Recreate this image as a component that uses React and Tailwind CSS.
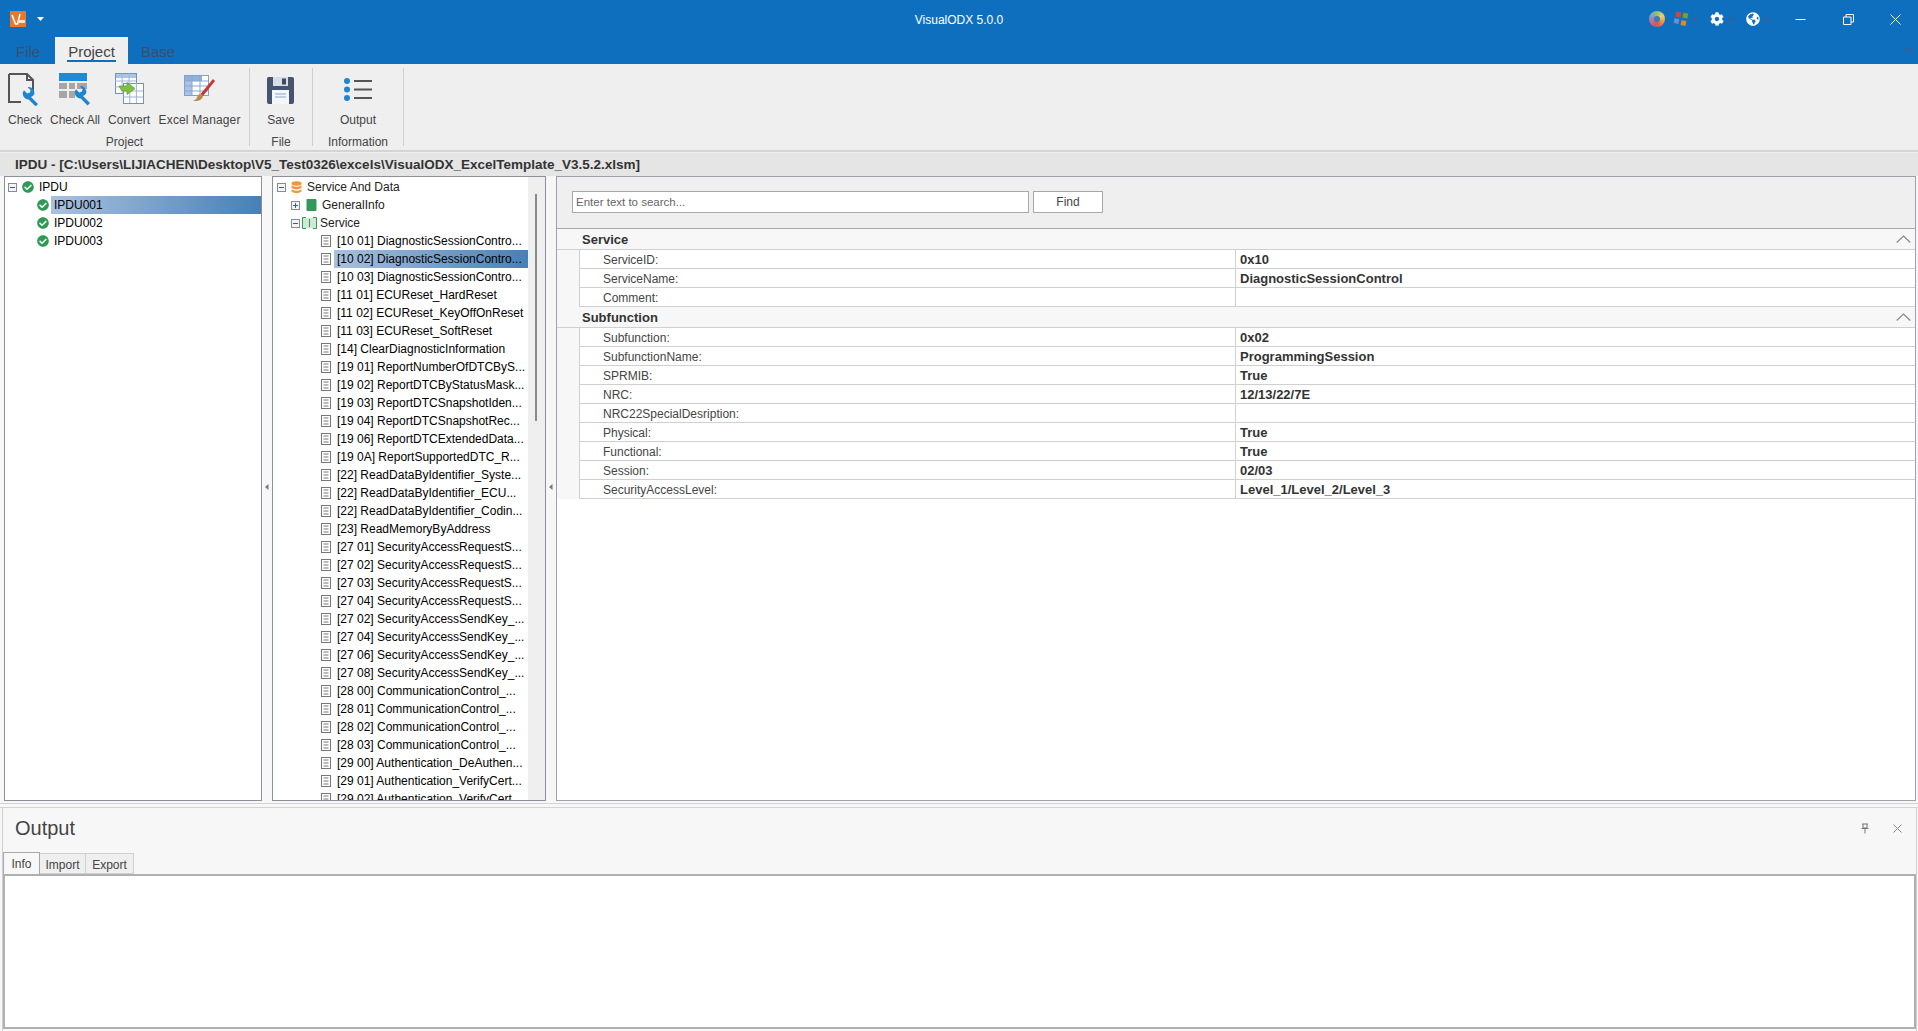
import React from "react";
import { FaCog, FaGlobeAmericas, FaCheckCircle } from "react-icons/fa";

const Chevron = ({ className = "" }) => (
  <svg width="8" height="5" viewBox="0 0 8 5" className={className}>
    <path d="M0.7 0.7 L4 4 L7.3 0.7" fill="none" stroke="#3d5f86" strokeWidth="1.4" />
  </svg>
);

const Wrench = ({ x = 0, y = 0 }) => (
  <g transform={`translate(${x} ${y})`}>
    <path d="M1 1.2 L4.2 4.4 L7 3.6 L7.6 0.9 L4.6 -1.8 A5.7 5.7 0 0 1 11 5.8 A5.7 5.7 0 0 1 8 8 L15 15 L12.6 17.4 L5.7 10.4 A5.7 5.7 0 0 1 1 1.2 Z" fill="#1d86cf" />
  </g>
);

const CheckIcon = () => (
  <svg width="34" height="33" viewBox="0 0 34 33">
    <path d="M1 1 H19 L25 7 V18 M25 7 H19 V1 M1 1 V29 H13" fill="none" stroke="#555" strokeWidth="2" />
    <Wrench x={15} y={16} />
  </svg>
);

const CheckAllIcon = () => (
  <svg width="34" height="33" viewBox="0 0 34 33">
    <rect x="1" y="0" width="28" height="8" fill="#2389d2" />
    <g fill="#a6a6a6">
      <rect x="1" y="10" width="8" height="6" />
      <rect x="11" y="10" width="6" height="6" />
      <rect x="19" y="10" width="10" height="6" />
      <rect x="1" y="18" width="8" height="7" />
      <rect x="11" y="18" width="6" height="7" />
    </g>
    <Wrench x={17} y={15} />
  </svg>
);

const Sheet = ({ x, y, w, h, head = "#a9c6e8" }) => (
  <g transform={`translate(${x} ${y})`}>
    <rect x="0.5" y="0.5" width={w} height={h} fill="#fff" stroke="#7590bd" />
    <rect x="1" y="1" width={w - 1} height="4" fill={head} />
    <path d={`M0 ${h * 0.4} H${w} M0 ${h * 0.7} H${w} M${w * 0.34} 0 V${h} M${w * 0.67} 0 V${h}`} stroke="#9db4d6" strokeWidth="1" />
  </g>
);

const ConvertIcon = () => (
  <svg width="31" height="32" viewBox="0 0 31 32">
    <Sheet x={1} y={0} w={21} h={20} />
    <Sheet x={9} y={10} w={20} h={20} head="#fff" />
    <path d="M5 13 H13 V9.5 L21 15.5 L13 21.5 V18 H8 Z" fill="#7fc241" stroke="#5f9a2c" strokeWidth="0.7" />
  </svg>
);

const ExcelIcon = () => (
  <svg width="32" height="30" viewBox="0 0 32 30">
    <rect x="0.5" y="2.5" width="24" height="20" fill="#fff" stroke="#8aa0c2" />
    <rect x="1" y="3" width="17" height="5" fill="#8fb1dc" />
    <rect x="1" y="8" width="7" height="14" fill="#a9c4e6" />
    <path d="M0 8 H24 M0 13 H24 M0 18 H24 M8 3 V22 M16 3 V22" stroke="#8aa7cf" strokeWidth="1" />
    <path d="M29 6 L31 8 L19 23 L16.5 21 Z" fill="#c8382e" />
    <path d="M16 21 L19 23.5 C18 27 14 28.5 9 28 C12 27 13 25 13.5 23 C14 22 15 21 16 21 Z" fill="#b98a4e" />
  </svg>
);

const SaveIcon = () => (
  <svg width="27" height="27" viewBox="0 0 27 27">
    <path d="M1.5 0 H25 Q27 0 27 2 V25 Q27 27 25 27 H2 Q0 27 0 25 V1.5 Q0 0 1.5 0 Z" fill="#46546f" />
    <rect x="6" y="0" width="15" height="9" fill="#d9dde5" />
    <rect x="15" y="1.5" width="4" height="6" fill="#3d4a63" />
    <rect x="5" y="13" width="17" height="14" fill="#f4f6fa" />
    <path d="M8 17 H19 M8 20 H19" stroke="#7fa6d6" strokeWidth="1" />
  </svg>
);

const OutputIcon = () => (
  <svg width="29" height="23" viewBox="0 0 29 23">
    <circle cx="3" cy="3" r="3" fill="#1d86cf" />
    <circle cx="3" cy="11.5" r="3" fill="#1d86cf" />
    <circle cx="3" cy="20" r="3" fill="#1d86cf" />
    <path d="M10 3 H28 M10 11.5 H28 M10 20 H28" stroke="#555" strokeWidth="2" />
  </svg>
);

const Logo = () => (
  <svg width="16" height="16" viewBox="0 0 16 16" className="block">
    <rect width="16" height="16" fill="#e8782b" />
    <path d="M2 4 L5.5 13 L7.5 13 L10 3" fill="none" stroke="#fff" strokeWidth="1.6" />
    <rect x="8" y="9" width="7" height="3" fill="#fbe3d0" />
  </svg>
);

const Squares = () => (
  <svg width="16" height="16" viewBox="0 0 16 16">
    <rect x="3" y="1" width="5" height="5" transform="rotate(10 5 3)" fill="#d9403a" />
    <rect x="10" y="2" width="5" height="5" transform="rotate(10 12 4)" fill="#78a02e" />
    <rect x="1" y="7.5" width="5" height="5" transform="rotate(10 3 10)" fill="#5e94cf" />
    <rect x="8" y="9.5" width="5" height="5" transform="rotate(10 10 12)" fill="#e2862e" />
  </svg>
);

const Expander = ({ open }) => (
  <svg width="9" height="9" viewBox="0 0 9 9" className="shrink-0">
    <rect x="0.5" y="0.5" width="8" height="8" fill="#f4f4f4" stroke="#8a8a8a" />
    <path d={open ? "M2 4.5 H7" : "M2 4.5 H7 M4.5 2 V7"} stroke="#2f5f9a" strokeWidth="1" />
  </svg>
);

const LeafIcon = () => (
  <svg width="10" height="12" viewBox="0 0 10 12" className="shrink-0">
    <rect x="0.5" y="0.5" width="9" height="11" fill="#fff" stroke="#777" />
    <path d="M2.5 3 H7.5 M2.5 6 H7.5 M2.5 9 H7.5" stroke="#777" strokeWidth="1" />
  </svg>
);

const DbIcon = () => (
  <svg width="11" height="13" viewBox="0 0 11 13" className="shrink-0">
    <ellipse cx="5.5" cy="2.5" rx="5" ry="2.2" fill="#f0963a" />
    <path d="M0.5 4.2 Q5.5 7.4 10.5 4.2 V7 Q5.5 9.8 0.5 7 Z" fill="#f0963a" />
    <path d="M0.5 8.2 Q5.5 11.4 10.5 8.2 V10.6 Q5.5 13.8 0.5 10.6 Z" fill="#f0963a" />
  </svg>
);

const BookIcon = () => (
  <svg width="11" height="12" viewBox="0 0 11 12" className="shrink-0">
    <rect x="0.5" y="0" width="10" height="12" rx="1" fill="#32995a" />
  </svg>
);

const ServiceIcon = () => (
  <svg width="15" height="12" viewBox="0 0 15 12" className="shrink-0">
    <rect x="1" y="1" width="13" height="10" fill="#cfe9d5" />
    <path d="M4 0.5 H0.5 V11.5 H4 M11 0.5 H14.5 V11.5 H11 M7.5 2 V10" fill="none" stroke="#2f9a55" strokeWidth="1" />
  </svg>
);

const RibbonButton = ({ icon, label, width = "", labelClass = "" }) => (
  <div className={`flex flex-col items-center ${width}`}>
    <div className="h-[44px] flex items-start pt-[9px]">{icon}</div>
    <div className={`mt-[4px] h-[16px] leading-[16px] text-[12px] text-[#444] whitespace-nowrap ${labelClass}`}>{label}</div>
  </div>
);

const RibbonGroup = ({ label, width, pad, gap, children }) => (
  <div className={`flex flex-col ${width} border-r border-[#cfcfcf] h-[78px] mt-[4px] shrink-0`}>
    <div className={`flex ${pad} ${gap} h-[64px] -mt-[4px]`}>{children}</div>
    <div className="text-center text-[12px] leading-[16px] text-[#444] mt-[6px]">{label}</div>
  </div>
);

const services = [
  "[10 01] DiagnosticSessionContro...",
  "[10 02] DiagnosticSessionContro...",
  "[10 03] DiagnosticSessionContro...",
  "[11 01] ECUReset_HardReset",
  "[11 02] ECUReset_KeyOffOnReset",
  "[11 03] ECUReset_SoftReset",
  "[14] ClearDiagnosticInformation",
  "[19 01] ReportNumberOfDTCByS...",
  "[19 02] ReportDTCByStatusMask...",
  "[19 03] ReportDTCSnapshotIden...",
  "[19 04] ReportDTCSnapshotRec...",
  "[19 06] ReportDTCExtendedData...",
  "[19 0A] ReportSupportedDTC_R...",
  "[22] ReadDataByIdentifier_Syste...",
  "[22] ReadDataByIdentifier_ECU...",
  "[22] ReadDataByIdentifier_Codin...",
  "[23] ReadMemoryByAddress",
  "[27 01] SecurityAccessRequestS...",
  "[27 02] SecurityAccessRequestS...",
  "[27 03] SecurityAccessRequestS...",
  "[27 04] SecurityAccessRequestS...",
  "[27 02] SecurityAccessSendKey_...",
  "[27 04] SecurityAccessSendKey_...",
  "[27 06] SecurityAccessSendKey_...",
  "[27 08] SecurityAccessSendKey_...",
  "[28 00] CommunicationControl_...",
  "[28 01] CommunicationControl_...",
  "[28 02] CommunicationControl_...",
  "[28 03] CommunicationControl_...",
  "[29 00] Authentication_DeAuthen...",
  "[29 01] Authentication_VerifyCert...",
  "[29 02] Authentication_VerifyCert...",
];

const serviceProps = [
  ["ServiceID:", "0x10"],
  ["ServiceName:", "DiagnosticSessionControl"],
  ["Comment:", ""],
];
const subProps = [
  ["Subfunction:", "0x02"],
  ["SubfunctionName:", "ProgrammingSession"],
  ["SPRMIB:", "True"],
  ["NRC:", "12/13/22/7E"],
  ["NRC22SpecialDesription:", ""],
  ["Physical:", "True"],
  ["Functional:", "True"],
  ["Session:", "02/03"],
  ["SecurityAccessLevel:", "Level_1/Level_2/Level_3"],
];

const Section = ({ title, rows }) => (
  <div>
    <div className="h-[21px] flex items-center justify-between pl-[25px] pr-[4px] bg-[#f7f7f7] border-b border-[#d0d0d0]">
      <span className="text-[13px] font-bold text-[#333] mt-[1px]">{title}</span>
      <svg width="15" height="8" viewBox="0 0 15 8">
        <path d="M0.7 7.5 L7.5 1 L14.3 7.5" fill="none" stroke="#888" strokeWidth="1.2" />
      </svg>
    </div>
    {rows.map(([k, v]) => (
      <div key={k} className="flex h-[19px] bg-[#f7f7f7]">
        <div className="w-[22px] shrink-0" />
        <div className="flex flex-1 bg-white border-l border-b border-[#d0d0d0]">
          <div className="w-[656px] shrink-0 pl-[23px] text-[12px] leading-[20px] text-[#444] border-r border-[#d0d0d0] whitespace-nowrap">{k}</div>
          <div className="pl-[4px] text-[13px] font-bold leading-[20px] text-[#333] whitespace-nowrap">{v}</div>
        </div>
      </div>
    ))}
  </div>
);

const SplitArrow = () => (
  <div className="w-[10px] shrink-0 flex items-center justify-center">
    <svg width="4" height="6" viewBox="0 0 4 6" className="mt-[-3px]">
      <path d="M3.5 0 L0 3 L3.5 6 Z" fill="#777" />
    </svg>
  </div>
);

export default function App() {
  return (
    <div className="w-[1918px] h-[1031px] overflow-hidden flex flex-col bg-[#f7f7f7] font-['Liberation_Sans',Arial,sans-serif]">
      {/* Title bar */}
      <div className="h-[37px] bg-[#0f6fbf] flex items-center relative shrink-0">
        <div className="ml-[10px] mt-[1px]"><Logo /></div>
        <svg width="7" height="4" viewBox="0 0 7 4" className="ml-[11px] mt-[1px]"><path d="M0 0 H7 L3.5 4 Z" fill="#fff" /></svg>
        <div className="absolute left-0 right-0 top-[12px] text-center text-[12px] leading-[16px] text-white">VisualODX 5.0.0</div>
        <div className="ml-auto flex items-center mt-[1px]">
          <div className="w-[16px] h-[16px] rounded-full bg-[conic-gradient(#8fc06a,#e8d36a,#e8913f,#d9534f,#c26a8c,#7aa0d0,#8fc06a)] flex items-center justify-center">
            <div className="w-[6px] h-[6px] rounded-full bg-[#3f78b8]" />
          </div>
          <div className="ml-[8px]"><Squares /></div>
          <Chevron className="ml-[3px]" />
          <FaCog className="ml-[10px] text-white text-[14px]" />
          <Chevron className="ml-[4px]" />
          <FaGlobeAmericas className="ml-[10px] text-white text-[14px]" />
          <Chevron className="ml-[4px]" />
          <div className="ml-[4px] w-[48px] flex justify-center"><svg width="11" height="11" viewBox="0 0 11 11"><path d="M0.5 5.5 H10.5" stroke="#fff" strokeWidth="1" /></svg></div>
          <div className="w-[48px] flex justify-center"><svg width="11" height="11" viewBox="0 0 11 11"><path d="M0.5 3 H8 V10.5 H0.5 Z M3 3 V0.5 H10.5 V8 H8" fill="none" stroke="#fff" strokeWidth="1" /></svg></div>
          <div className="w-[46px] flex justify-center"><svg width="11" height="11" viewBox="0 0 11 11"><path d="M0.5 0.5 L10.5 10.5 M10.5 0.5 L0.5 10.5" stroke="#fff" strokeWidth="1" /></svg></div>
        </div>
      </div>
      {/* Tabs */}
      <div className="h-[27px] bg-[#0f6fbf] flex shrink-0 relative text-[15px]">
        <div className="ml-[16px] w-[39px] leading-[29px] text-[#3b5068]">File</div>
        <div className="w-[73px] bg-[#efefef] text-center relative text-[#444] leading-[29px]">
          Project
          <div className="absolute left-[12px] right-[12px] bottom-[2px] h-[2px] bg-[#0f6fbf]" />
        </div>
        <div className="ml-[13px] leading-[29px] text-[#3b5068]">Base</div>
        <svg width="9" height="6" viewBox="0 0 9 6" className="absolute right-[5px] top-[10px]"><path d="M0.7 5 L4.5 1.2 L8.3 5" fill="none" stroke="#3d5f86" strokeWidth="1.4" /></svg>
      </div>
      {/* Ribbon */}
      <div className="h-[86px] bg-[#efefef] flex shrink-0 items-start">
        <RibbonGroup label="Project" width="w-[250px]" pad="pl-[8px]" gap="gap-[8px]">
          <RibbonButton icon={<CheckIcon />} label="Check" />
          <RibbonButton icon={<CheckAllIcon />} label="Check All" />
          <RibbonButton icon={<ConvertIcon />} label="Convert" />
          <RibbonButton icon={<ExcelIcon />} label="Excel Manager" width="w-[83px]" labelClass="tracking-[0.15px]" />
        </RibbonGroup>
        <RibbonGroup label="File" width="w-[63px]" pad="justify-center" gap="">
          <RibbonButton icon={<div className="pt-[4px]"><SaveIcon /></div>} label="Save" />
        </RibbonGroup>
        <RibbonGroup label="Information" width="w-[91px]" pad="justify-center" gap="">
          <RibbonButton icon={<div className="pt-[5px]"><OutputIcon /></div>} label="Output" />
        </RibbonGroup>
      </div>
      {/* Document title */}
      <div className="h-[3px] shrink-0 bg-[#d4d4d4] border-b border-[#efefef]" />
      <div className="h-[23px] shrink-0 bg-[#e5e5e5] pl-[15px] text-[13.5px] font-bold leading-[23px] text-[#333] whitespace-nowrap">
        IPDU - [C:\Users\LIJIACHEN\Desktop\V5_Test0326\excels\VisualODX_ExcelTemplate_V3.5.2.xlsm]
      </div>
      {/* Panels */}
      <div className="h-[625px] shrink-0 flex pl-[4px] pr-[2px]">
        <div className="w-[258px] shrink-0 bg-white border border-[#8f8f9c] overflow-hidden text-[12px] text-black">
          <div className="h-[18px] flex items-center pl-[3px] mt-[1px]">
            <Expander open />
            <FaCheckCircle className="ml-[5px] text-[12px] text-[#2f9a55]" />
            <span className="ml-[5px]">IPDU</span>
          </div>
          {["IPDU001", "IPDU002", "IPDU003"].map((n, i) => (
            <div key={n} className="h-[18px] flex items-center pl-[32px]">
              <FaCheckCircle className="text-[12px] text-[#2f9a55] shrink-0" />
              <span className={`ml-[2px] pl-[3px] flex-1 h-[18px] leading-[18px] ${i === 0 ? "bg-linear-to-r from-[#a9c1df] to-[#4680b6]" : ""}`}>{n}</span>
            </div>
          ))}
        </div>
        <SplitArrow />
        <div className="w-[274px] shrink-0 bg-white border border-[#8f8f9c] overflow-hidden text-[12px] text-black flex">
          <div className="flex-1 min-w-0 overflow-hidden">
            <div className="h-[18px] flex items-center pl-[4px] mt-[1px]">
              <Expander open />
              <span className="ml-[5px]"><DbIcon /></span>
              <span className="ml-[5px] text-[#222]">Service And Data</span>
            </div>
            <div className="h-[18px] flex items-center pl-[18px]">
              <Expander />
              <span className="ml-[6px]"><BookIcon /></span>
              <span className="ml-[5px] text-[#222]">GeneralInfo</span>
            </div>
            <div className="h-[18px] flex items-center pl-[18px]">
              <Expander open />
              <span className="ml-[2px]"><ServiceIcon /></span>
              <span className="ml-[3px] text-[#222]">Service</span>
            </div>
            {services.map((s, i) => (
              <div key={i} className="h-[18px] flex items-center pl-[48px]">
                <LeafIcon />
                <span className={`ml-[3px] pl-[3px] flex-1 h-[18px] leading-[18px] whitespace-nowrap ${i === 1 ? "bg-linear-to-r from-[#a9c1df] to-[#4680b6]" : ""}`}>{s}</span>
              </div>
            ))}
          </div>
          <div className="w-[17px] shrink-0 bg-[#efefef] pt-[17px] pl-[7px]">
            <div className="w-[2px] h-[227px] bg-[#8a8a8a]" />
          </div>
        </div>
        <SplitArrow />
        <div className="flex-1 min-w-0 bg-white border border-[#a0a0a8] overflow-hidden">
          <div className="h-[52px] bg-[#efefef] border-b border-[#a8a8a8] flex items-start pl-[15px] pt-[14px] gap-[4px]">
            <input
              readOnly
              placeholder="Enter text to search..."
              className="w-[457px] h-[22px] bg-white border border-[#a8a8a8] px-[3px] text-[11.5px] text-[#555] placeholder:text-[#666] outline-none"
            />
            <div className="w-[70px] h-[22px] bg-white border border-[#a8a8a8] text-center text-[12px] leading-[20px] text-[#444]">Find</div>
          </div>
          <Section title="Service" rows={serviceProps} />
          <Section title="Subfunction" rows={subProps} />
        </div>
      </div>
      {/* Output */}
      <div className="h-[5px] shrink-0 border-t border-b border-[#d4d4d4] mt-[2px]" />
      <div className="flex-1 min-h-0 flex flex-col bg-[#f7f7f7] border-l border-r border-[#d0d0d0] ml-[2px] mr-[1px]">
        <div className="h-[44px] shrink-0 flex items-center pl-[12px] pr-[14px] pb-[4px]">
          <span className="text-[20px] text-[#444]">Output</span>
          <svg width="8" height="11" viewBox="0 0 8 11" className="ml-auto"><path d="M1 1 H7 M2 1 V5 H6 V1 M0.5 5.5 H7.5 M4 5.5 V10.5" fill="none" stroke="#777" strokeWidth="1" /></svg>
          <svg width="9" height="9" viewBox="0 0 9 9" className="ml-[24px]"><path d="M0.5 0.5 L8.5 8.5 M8.5 0.5 L0.5 8.5" stroke="#888" strokeWidth="1" /></svg>
        </div>
        <div className="h-[22px] shrink-0 flex items-end text-[12px]">
          <div className="w-[37px] h-[22px] bg-[#f7f7f7] border border-[#a8a8a8] border-b-0 text-center leading-[22px] text-[#444]">Info</div>
          <div className="w-[46px] h-[21px] bg-[#efefef] border border-l-0 border-[#d0d0d0] text-center leading-[22px] text-[#444]">Import</div>
          <div className="w-[48px] h-[21px] bg-[#efefef] border border-l-0 border-[#d0d0d0] text-center leading-[22px] text-[#444]">Export</div>
        </div>
        <div className="h-[155px] shrink-0 bg-white border-2 border-[#b0b0b0]" />
      </div>
    </div>
  );
}
